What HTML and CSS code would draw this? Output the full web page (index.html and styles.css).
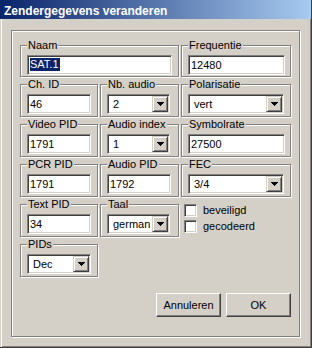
FILE: index.html
```html
<!DOCTYPE html>
<html>
<head>
<meta charset="utf-8">
<link rel="stylesheet" href="styles.css">
</head>
<body>
<div class="window">
  <div class="titlebar"><span class="title">Zendergegevens veranderen</span></div>
  <div class="client">
    <div class="frame">
      <div class="grid">
        <fieldset class="group span2 first"><legend>Naam</legend>
          <div class="edit sunken w-naam"><span class="sel">SAT.1</span></div>
        </fieldset>
        <fieldset class="group first"><legend>Frequentie</legend>
          <div class="edit sunken w-c">12480</div>
        </fieldset>

        <fieldset class="group"><legend>Ch. ID</legend>
          <div class="edit sunken w-a">46</div>
        </fieldset>
        <fieldset class="group"><legend>Nb. audio</legend>
          <div class="combo sunken w-b"><span class="val">2</span><span class="drop"><svg width="7" height="4" shape-rendering="crispEdges"><rect x="0" y="0" width="7" height="1"/><rect x="1" y="1" width="5" height="1"/><rect x="2" y="2" width="3" height="1"/><rect x="3" y="3" width="1" height="1"/></svg></span></div>
        </fieldset>
        <fieldset class="group"><legend>Polarisatie</legend>
          <div class="combo sunken w-cc"><span class="val">vert</span><span class="drop"><svg width="7" height="4" shape-rendering="crispEdges"><rect x="0" y="0" width="7" height="1"/><rect x="1" y="1" width="5" height="1"/><rect x="2" y="2" width="3" height="1"/><rect x="3" y="3" width="1" height="1"/></svg></span></div>
        </fieldset>

        <fieldset class="group"><legend>Video PID</legend>
          <div class="edit sunken w-a">1791</div>
        </fieldset>
        <fieldset class="group"><legend>Audio index</legend>
          <div class="combo sunken w-b"><span class="val">1</span><span class="drop"><svg width="7" height="4" shape-rendering="crispEdges"><rect x="0" y="0" width="7" height="1"/><rect x="1" y="1" width="5" height="1"/><rect x="2" y="2" width="3" height="1"/><rect x="3" y="3" width="1" height="1"/></svg></span></div>
        </fieldset>
        <fieldset class="group"><legend>Symbolrate</legend>
          <div class="edit sunken w-c">27500</div>
        </fieldset>

        <fieldset class="group"><legend>PCR PID</legend>
          <div class="edit sunken w-a">1791</div>
        </fieldset>
        <fieldset class="group"><legend>Audio PID</legend>
          <div class="edit sunken w-be">1792</div>
        </fieldset>
        <fieldset class="group"><legend>FEC</legend>
          <div class="combo sunken w-cc"><span class="val">3/4</span><span class="drop"><svg width="7" height="4" shape-rendering="crispEdges"><rect x="0" y="0" width="7" height="1"/><rect x="1" y="1" width="5" height="1"/><rect x="2" y="2" width="3" height="1"/><rect x="3" y="3" width="1" height="1"/></svg></span></div>
        </fieldset>

        <fieldset class="group"><legend>Text PID</legend>
          <div class="edit sunken w-a">34</div>
        </fieldset>
        <fieldset class="group"><legend>Taal</legend>
          <div class="combo sunken w-b"><span class="val">german</span><span class="drop"><svg width="7" height="4" shape-rendering="crispEdges"><rect x="0" y="0" width="7" height="1"/><rect x="1" y="1" width="5" height="1"/><rect x="2" y="2" width="3" height="1"/><rect x="3" y="3" width="1" height="1"/></svg></span></div>
        </fieldset>
        <div class="checks">
          <label class="checkrow"><span class="check sunken"></span><span>beveiligd</span></label>
          <label class="checkrow"><span class="check sunken"></span><span>gecodeerd</span></label>
        </div>

        <fieldset class="group"><legend>PIDs</legend>
          <div class="combo sunken w-a"><span class="val">Dec</span><span class="drop"><svg width="7" height="4" shape-rendering="crispEdges"><rect x="0" y="0" width="7" height="1"/><rect x="1" y="1" width="5" height="1"/><rect x="2" y="2" width="3" height="1"/><rect x="3" y="3" width="1" height="1"/></svg></span></div>
        </fieldset>
      </div>
      <div class="buttons">
        <div class="btn">Annuleren</div>
        <div class="btn">OK</div>
      </div>
    </div>
  </div>
</div>
</body>
</html>
```

FILE: styles.css
```css
html, body {
  margin: 0;
  padding: 0;
  background: #D4D0C8;
  overflow: hidden;
}

.window {
  width: 312px;
  height: 348px;
  box-sizing: border-box;
  background: #D4D0C8;
  border-right: 1px solid #404040;
  border-bottom: 1px solid #404040;
  font-family: "Liberation Sans", Arial, sans-serif;
  font-size: 11px;
  color: #000;
  display: flex;
  flex-direction: column;
}

.titlebar {
  height: 19px;
  box-sizing: border-box;
  padding: 4px 0 0 4px;
  background: linear-gradient(to right, #0A246A, #A6CAF0);
  color: #fff;
  font-weight: bold;
  font-size: 12px;
  line-height: 15px;
  white-space: nowrap;
}

.client {
  flex: 1;
  box-shadow: inset 1px 0 0 #D4D0C8, inset 2px 0 0 #fff, inset -1px -1px 0 #808080;
  padding: 11px 0 0 11px;
}

.frame {
  width: 289px;
  height: 307px;
  box-sizing: border-box;
  border: 1px solid #808080;
  box-shadow: inset 1px 1px 0 #fff, 1px 1px 0 #fff;
  padding: 9px 0 0 8px;
}

.grid {
  display: grid;
  grid-template-columns: 78px 79px 110px;
  grid-template-rows: 37px 38px 38px 38px 38px 38px;
  column-gap: 2px;
  row-gap: 2px;
}

.group {
  margin: 0;
  min-width: 0;
  box-sizing: border-box;
  border: 1px solid #808080;
  box-shadow: inset 1px 1px 0 #fff, 1px 1px 0 #fff;
  padding: 4px 6px 2px 6px;
}

.group.first {
  padding-bottom: 1px;
}

.span2 {
  grid-column: 1 / 3;
}

.group legend {
  padding: 0 1px;
  margin: 0;
  line-height: 11px;
  height: 11px;
  background: #D4D0C8;
  white-space: nowrap;
}

.sunken {
  box-sizing: border-box;
  border-top: 1px solid #808080;
  border-left: 1px solid #808080;
  border-right: 1px solid #fff;
  border-bottom: 1px solid #fff;
  box-shadow: inset 1px 1px 0 #404040, inset -1px -1px 0 #D4D0C8;
  padding: 1px;
  background: #fff;
}

.edit {
  height: 20px;
  line-height: 16px;
  padding-left: 2px;
  white-space: nowrap;
}

.sel {
  display: inline-block;
  background: #0A246A;
  color: #fff;
  line-height: 13px;
  padding: 0 1px 0 0;
  vertical-align: top;
  margin-top: 1px;
}

.w-naam { width: 145px; }
.w-a { width: 64px; }
.w-b { width: 63px; }
.w-be { width: 64px; }
.w-c { width: 97px; }
.w-cc { width: 96px; }

.combo {
  height: 20px;
  display: flex;
}

.combo .val {
  flex: 1;
  line-height: 16px;
  padding-left: 4px;
  white-space: nowrap;
}

.drop {
  width: 16px;
  height: 16px;
  box-sizing: border-box;
  background: #D4D0C8;
  border-top: 1px solid #D4D0C8;
  border-left: 1px solid #D4D0C8;
  border-right: 1px solid #404040;
  border-bottom: 1px solid #404040;
  box-shadow: inset 1px 1px 0 #fff, inset -1px -1px 0 #808080;
  display: flex;
  align-items: center;
  justify-content: center;
}

.drop svg {
  display: block;
  fill: #000;
}

.checks {
  display: flex;
  flex-direction: column;
  gap: 3px;
  padding: 5px 0 0 3px;
}

.checkrow {
  display: flex;
  align-items: center;
  gap: 6px;
  height: 13px;
  line-height: 13px;
}

.check {
  width: 13px;
  height: 13px;
  flex: none;
}

.buttons {
  display: flex;
  justify-content: flex-end;
  gap: 5px;
  margin-top: 16px;
  width: 271px;
}

.btn {
  width: 65px;
  height: 24px;
  box-sizing: border-box;
  background: #D4D0C8;
  border-top: 1px solid #fff;
  border-left: 1px solid #fff;
  border-right: 1px solid #404040;
  border-bottom: 1px solid #404040;
  box-shadow: inset -1px -1px 0 #808080;
  display: flex;
  align-items: center;
  justify-content: center;
}
```
